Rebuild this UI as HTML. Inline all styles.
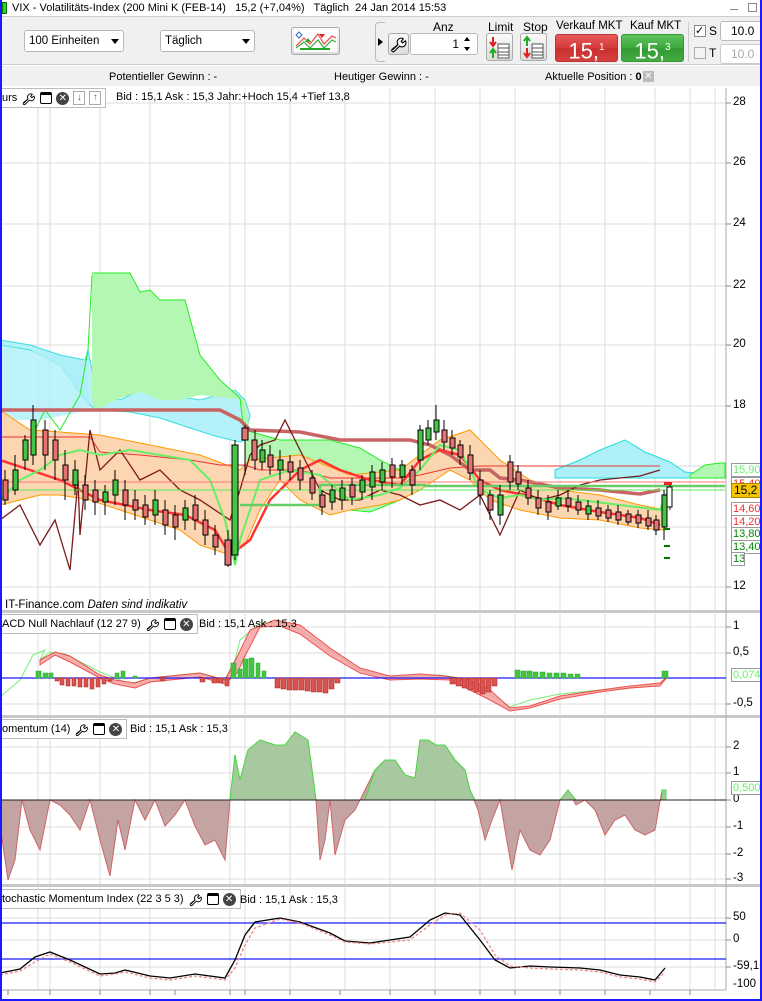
<!DOCTYPE html>
<html><head><meta charset="utf-8"><style>
*{margin:0;padding:0;box-sizing:border-box}
body{width:762px;height:1001px;overflow:hidden;background:#fff;font-family:"Liberation Sans",sans-serif;font-size:11px;color:#000;position:relative}
.abs{position:absolute}
#frame{position:absolute;left:0;top:0;width:762px;height:1001px;border:2px solid #1a1aff;border-top:none;pointer-events:none}
.tb{background:#f0f0f0}
.dd{position:absolute;height:22px;border:1px solid #b8b8b8;border-radius:3px;background:#fff;font-size:11.5px;line-height:20px;padding-left:4px}
.dd i{position:absolute;right:4px;top:8px;border-left:4px solid transparent;border-right:4px solid transparent;border-top:5px solid #000}
.btn{position:absolute;border:1px solid #aaa;border-radius:3px;background:linear-gradient(#fafafa,#ddd)}
.lbl{position:absolute;font-size:11px;white-space:nowrap}
.ax{position:absolute;font-size:11.5px;left:733px}
.tag{position:absolute;left:731px;width:31px;height:14px;border:1px solid #999;background:#fff;font-size:11px;line-height:12px;padding-left:1px;overflow:hidden;white-space:nowrap}
.ptitle{position:absolute;background:#fff;border:1px solid #bbb;border-left:none;height:20px;font-size:11px;line-height:18px;padding-left:2px;white-space:nowrap;display:flex;align-items:center;gap:4px;padding-right:4px}
.win{display:inline-block;width:12px;height:12px;border:1.5px solid #000;border-top-width:3px;border-radius:2px}
.cx{display:inline-block;width:13px;height:13px;background:#444;border-radius:50%;color:#fff;font-size:10px;line-height:13px;text-align:center}
.ar{display:inline-block;width:12px;height:14px;border:1px solid #aaa;font-size:10px;line-height:12px;text-align:center;font-weight:bold}
</style></head><body>
<svg width="0" height="0" style="position:absolute"><defs><symbol id="wr" viewBox="-2 -2 18 18"><path d="M1.5 12.5 L6.5 7.5 M6.5 7.5 A3.8 3.8 0 0 1 11.5 2 L9.5 4.5 L11 6 L13.5 4 A3.8 3.8 0 0 1 8 9 L3 14 A1 1 0 0 1 1 12 Z" fill="#fff" stroke="#000" stroke-width="1.1" stroke-linejoin="round"/></symbol></defs></svg>
<div class="abs" style="left:0;top:0;width:762px;height:17px;background:#fff;border-bottom:1px solid #ccc"></div>
<div class="abs" style="left:2px;top:2px;width:5px;height:12px;background:#3c3;border:1px solid #070"></div>
<div class="lbl" style="left:12px;top:2px;font-size:11px">VIX - Volatilitäts-Index (200 Mini K (FEB-14)&nbsp;&nbsp; 15,2 (+7,04%)&nbsp;&nbsp; Täglich&nbsp; 24 Jan 2014 15:53</div>
<div class="abs" style="left:730px;top:9px;width:8px;height:1px;background:#888"></div>
<div class="abs" style="left:748px;top:3px;width:9px;height:9px;border:1px solid #888"></div>
<div class="abs tb" style="left:0;top:17px;width:762px;height:48px;border-bottom:1px solid #ccc"></div>
<div class="dd" style="left:24px;top:30px;width:100px">100 Einheiten<i></i></div>
<div class="dd" style="left:160px;top:30px;width:95px">Täglich<i></i></div>
<div class="btn" style="left:291px;top:27px;width:49px;height:28px">
<svg width="47" height="26"><rect x="2" y="2" width="43" height="22" fill="#fff"/><polyline points="4,18 12,10 18,16 26,6 32,16 40,8 44,10" fill="none" stroke="#e44" stroke-width="1.2"/><polyline points="4,20 12,14 18,20 26,12 32,20 40,12 44,14" fill="none" stroke="#3a3" stroke-width="1.2"/><rect x="8" y="20" width="30" height="2" fill="#2a2"/><path d="M7 4 l3 3 -3 3 -3 -3z" fill="none" stroke="#36c"/><path d="M13 14 l3 -4 3 4z" fill="#2a2"/><path d="M27 6 l3 4 3 -4z" fill="#d22"/></svg></div>
<div class="abs" style="left:375px;top:22px;width:10px;height:40px;border:1px solid #bbb;border-right:none;border-radius:4px 0 0 4px"></div>
<div class="abs" style="left:378px;top:38px;border-top:4px solid transparent;border-bottom:4px solid transparent;border-left:5px solid #000"></div>
<div class="btn" style="left:388px;top:33px;width:21px;height:22px"><svg width="19" height="20"><use href="#wr"/></svg></div>
<div class="lbl" style="left:433px;top:20px;font-size:12px">Anz</div>
<div class="abs" style="left:410px;top:33px;width:68px;height:22px;border:1px solid #bbb;border-radius:3px;background:#fff;text-align:right;padding-right:18px;line-height:20px;font-size:12px">1</div>
<div class="abs" style="left:464px;top:37px;border-left:3px solid transparent;border-right:3px solid transparent;border-bottom:4px solid #000"></div>
<div class="abs" style="left:464px;top:47px;border-left:3px solid transparent;border-right:3px solid transparent;border-top:4px solid #000"></div>
<div class="lbl" style="left:488px;top:20px;font-size:12px">Limit</div>
<div class="btn" style="left:486px;top:33px;width:27px;height:28px"><svg width="25" height="26"><path d="M6 3 v8 M3 8 l3 4 3 -4" stroke="#d22" stroke-width="2" fill="none"/><path d="M6 24 v-8 M3 19 l3 -4 3 4" stroke="#2a2" stroke-width="2" fill="none"/><rect x="11" y="10" width="11" height="14" fill="#fff" stroke="#555"/><path d="M11 14h11M11 18h11M11 21h11" stroke="#555"/></svg></div>
<div class="lbl" style="left:523px;top:20px;font-size:12px">Stop</div>
<div class="btn" style="left:520px;top:33px;width:27px;height:28px"><svg width="25" height="26"><path d="M6 12 v-8 M3 7 l3 -4 3 4" stroke="#2a2" stroke-width="2" fill="none"/><path d="M6 14 v8 M3 19 l3 4 3 -4" stroke="#d22" stroke-width="2" fill="none"/><rect x="11" y="10" width="11" height="14" fill="#fff" stroke="#555"/><path d="M11 14h11M11 18h11M11 21h11" stroke="#555"/></svg></div>
<div class="lbl" style="left:556px;top:20px;font-size:11.5px">Verkauf MKT</div>
<div class="abs" style="left:555px;top:34px;width:63px;height:28px;border-radius:3px;background:linear-gradient(#e85a5a,#d43a3a 50%,#c83030 52%,#d84040);border:1px solid #b33;color:#fff;font-size:22px;line-height:26px;text-align:center">15,<sup style="font-size:10px">1</sup></div>
<div class="lbl" style="left:630px;top:20px;font-size:11.5px">Kauf MKT</div>
<div class="abs" style="left:621px;top:34px;width:63px;height:28px;border-radius:3px;background:linear-gradient(#5cc45c,#3da83d 50%,#339a33 52%,#44aa44);border:1px solid #393;color:#fff;font-size:22px;line-height:26px;text-align:center">15,<sup style="font-size:10px">3</sup></div>
<div class="abs" style="left:688px;top:22px;width:1px;height:40px;background:#ccc"></div>
<div class="abs" style="left:694px;top:25px;width:12px;height:12px;border:1px solid #888;background:#fff;font-size:11px;line-height:10px">✓</div>
<div class="lbl" style="left:709px;top:24px;font-size:12px">S</div>
<div class="abs" style="left:720px;top:21px;width:42px;height:20px;border:1px solid #bbb;border-radius:3px;background:#fff;line-height:18px;padding-left:10px;font-size:12px">10.0</div>
<div class="abs" style="left:694px;top:47px;width:12px;height:12px;border:1px solid #aaa;background:#f4f4f4"></div>
<div class="lbl" style="left:709px;top:46px;font-size:12px">T</div>
<div class="abs" style="left:720px;top:44px;width:42px;height:20px;border:1px solid #ccc;border-radius:3px;background:#fff;line-height:18px;padding-left:10px;color:#aaa;font-size:12px">10.0</div>
<div class="abs tb" style="left:0;top:66px;width:762px;height:20px"></div>
<div class="lbl" style="left:109px;top:71px">Potentieller Gewinn : -</div>
<div class="lbl" style="left:334px;top:71px">Heutiger Gewinn : -</div>
<div class="lbl" style="left:545px;top:71px">Aktuelle Position : <b>0</b></div>
<div class="abs" style="left:643px;top:71px;width:11px;height:11px;background:#bbb;color:#fff;font-size:10px;line-height:11px;text-align:center">✕</div>

<svg class="abs" style="left:0;top:86px" width="762" height="915" viewBox="0 86 762 915">
<rect x="0" y="86" width="762" height="915" fill="#fff"/>
<g stroke="#dcdcdc" stroke-width="1">
<path d="M38 88V990M50 88V990M100 88V990M150 88V990M230 88V990M245 88V990M290 88V990M345 88V990M390 88V990M435 88V990M480 88V990M515 88V990M560 88V990M605 88V990M655 88V990M690 88V990M715 88V990"/>
<path d="M0 103H726M0 163H726M0 224H726M0 286H726M0 345H726M0 406H726M0 466H726M0 527H726M0 587H726"/>
<path d="M0 627H726M0 653H726M0 704H726"/>
<path d="M0 747H726M0 773H726M0 827H726M0 854H726M0 879H726"/>
<path d="M0 918H726M0 940H726M0 967H726"/>
</g>
<g fill="#c8c8c8"><rect x="0" y="610" width="762" height="3"/><rect x="0" y="715" width="762" height="3"/><rect x="0" y="884" width="762" height="3"/></g>
<path d="M726 88V990" stroke="#aaa"/>
<path d="M0 990H726" stroke="#aaa"/>
<g stroke="#888"><path d="M726 103h5M726 163h5M726 224h5M726 286h5M726 345h5M726 406h5M726 587h5M726 627h5M726 653h5M726 704h5M726 747h5M726 773h5M726 800h5M726 827h5M726 854h5M726 879h5M726 918h5M726 940h5M726 967h5"/></g>
<g stroke="#888"><path d="M8 990v5M50 990v5M100 990v5M150 990v5M175 990v5M230 990v5M245 990v5M290 990v5M340 990v5M390 990v5M435 990v5M480 990v5M515 990v5M560 990v5M605 990v5M650 990v5M690 990v5"/></g>

<path d="M0 345 L30 350 60 365 85 400 95 410 130 412 160 418 190 428 215 436 240 442 245 440 250 415 245 400 235 390 200 400 170 395 140 390 120 400 95 385 88 350 L85 360 60 355 30 345 0 340Z" fill="#aef0f8" stroke="#2dd" stroke-width="1" opacity="0.9"/>
<path d="M80 360 L85 365 L90 410 L40 420 L0 420 L0 345Z" fill="#aef0f8" opacity="0.8"/>
<path d="M555 470 L580 460 600 450 625 440 645 452 670 462 685 472 705 474 725 472 725 478 L555 478Z" fill="#aef0f8" stroke="#2dd"/>
<path d="M92 273 L130 273 140 292 150 290 160 300 185 300 200 355 220 380 240 398 245 440 250 430 245 400 200 395 180 400 160 400 140 392 120 398 105 405 95 412 92 400Z" fill="#b3f7b3"/>
<path d="M92 273 L130 273 140 292 150 290 160 300 185 300 200 355 220 380 240 398 245 440" fill="none" stroke="#2e2" stroke-width="1"/>
<path d="M92 275 L88 350 80 395 60 430 45 410 30 440 10 450" fill="none" stroke="#2e2"/>
<path d="M245 430 L280 440 330 440 360 448 380 460 400 470 420 472 400 500 370 512 350 510 330 495 300 475 260 470 245 470Z" fill="#b3f7b3" stroke="#2e2"/>
<path d="M690 475 L705 465 720 463 725 463 725 478 690 478Z" fill="#b3f7b3" stroke="#2e2"/>
<path d="M0 410 L30 430 60 432 100 435 150 445 200 455 240 470 250 460 300 455 350 475 400 470 440 440 470 430 500 460 530 480 560 490 600 495 640 505 665 510 665 530 640 528 600 520 560 518 520 510 490 500 470 480 450 470 420 490 400 500 380 505 350 510 330 515 300 500 280 480 260 510 245 545 230 555 200 545 180 530 150 520 120 510 90 500 60 495 40 495 20 500 0 505Z" fill="#fcd6b0" stroke="#f90" stroke-width="1"/>
<path d="M0 410 L75 410 220 410 240 420 250 430 300 432 340 440 410 440 430 445 450 455 470 470 490 470 500 478 520 480 560 488 600 490 640 494 660 490" fill="none" stroke="#c86464" stroke-width="3.5"/>
<path d="M0 437 L90 437 L100 452 140 455 190 460 220 465 245 465 260 470 300 470 330 478 400 478 420 475 450 468 480 466 520 466 560 466 660 466" fill="none" stroke="#e33" stroke-width="1"/>
<path d="M0 460 L30 470 60 480 100 500 150 510 185 515 215 530 230 555 250 540 270 500 300 470 320 460 340 470 370 480 400 485 420 460 440 450 460 455 480 480 500 490 530 496 560 505 600 512 640 518 660 525" fill="none" stroke="#f33" stroke-width="2.5"/>
<path d="M0 520 L20 505 40 545 55 520 70 570 78 480 80 535 90 430 100 470 120 450 140 480 160 470 180 490 200 500 215 510 230 520 240 490 250 455 260 445 275 440 285 420 300 450 320 490 340 500 360 500 380 490 400 495 420 505 440 500 460 510 480 495 500 535 520 490 540 500 560 495 580 485 600 480 620 478 640 476 660 470" fill="none" stroke="#7a1a1a" stroke-width="1.3"/>
<path d="M0 500 L20 480 40 470 60 455 80 450 100 455 130 450 160 455 190 460 210 480 225 520 235 565 240 540 260 480 290 470 320 475 350 500 380 495 400 488 420 470 440 445 460 450 480 490 500 498 520 495 540 500 560 498 580 500 620 505 660 510 668 490" fill="none" stroke="#6e6" stroke-width="2"/>
<path d="M240 505 L320 505 L320 485 L425 485 L425 486 L725 486" fill="none" stroke="#6c6" stroke-width="2.5"/>
<path d="M0 490 L725 490" stroke="#5e5" stroke-width="1"/>
<path d="M0 482 L725 482" stroke="#f77" stroke-width="1"/>
<g stroke="#000" stroke-width="1">
<path d="M5 470V505M15 455V495M25 435V470M33 405V465M45 420V470M55 430V480M65 450V500M75 460V495M85 475V510M95 480V515M105 485V515M115 470V505M125 480V520M135 490V520M145 495V525M155 490V525M165 500V535M175 505V540M185 500V530M195 495V530M205 510V545M215 525V555M228 530V567M235 440V560M245 425V475M255 430V470M262 440V470M270 445V475M280 450V480M290 455V480M300 460V490M312 470V500M322 490V515M332 485V510M342 480V510M352 478V505M362 475V500M372 465V500M382 462V490M392 458V488M402 460V485M412 465V495M420 425V470M428 420V445M436 405V440M444 420V450M452 430V455M460 440V465M470 445V480M480 470V505M490 490V520M500 485V525M510 455V490M518 465V490M528 480V505M538 490V515M548 495V520M558 490V510M568 490V512M578 495V515M588 500V520M598 500V520M608 505V522M618 505V525M628 510V525M638 510V528M648 510V530M656 515V535M664 490V540M670 482V510"/>
</g>
<g stroke="#000" stroke-width="1">
<rect x="3" y="480" width="5" height="20" fill="#e57373"/><rect x="13" y="470" width="5" height="20" fill="#44c444"/><rect x="23" y="440" width="5" height="20" fill="#44c444"/><rect x="31" y="420" width="5" height="35" fill="#44c444"/><rect x="43" y="430" width="5" height="25" fill="#e57373"/><rect x="53" y="440" width="5" height="20" fill="#e57373"/><rect x="63" y="465" width="5" height="15" fill="#e57373"/><rect x="73" y="470" width="5" height="15" fill="#44c444"/><rect x="83" y="485" width="5" height="15" fill="#e57373"/><rect x="93" y="490" width="5" height="12" fill="#e57373"/><rect x="103" y="492" width="5" height="10" fill="#44c444"/><rect x="113" y="480" width="5" height="15" fill="#44c444"/><rect x="123" y="490" width="5" height="15" fill="#e57373"/><rect x="133" y="500" width="5" height="10" fill="#e57373"/><rect x="143" y="505" width="5" height="12" fill="#e57373"/><rect x="153" y="500" width="5" height="15" fill="#44c444"/><rect x="163" y="510" width="5" height="15" fill="#e57373"/><rect x="173" y="515" width="5" height="12" fill="#e57373"/><rect x="183" y="508" width="5" height="12" fill="#44c444"/><rect x="193" y="505" width="5" height="15" fill="#e57373"/><rect x="203" y="520" width="5" height="15" fill="#e57373"/><rect x="213" y="535" width="5" height="12" fill="#e57373"/><rect x="225" y="540" width="6" height="25" fill="#e57373"/><rect x="232" y="445" width="6" height="110" fill="#44c444"/><rect x="242" y="428" width="6" height="12" fill="#e57373"/><rect x="252" y="440" width="5" height="20" fill="#e57373"/><rect x="260" y="450" width="5" height="12" fill="#44c444"/><rect x="268" y="455" width="5" height="12" fill="#e57373"/><rect x="278" y="460" width="5" height="10" fill="#44c444"/><rect x="288" y="462" width="5" height="10" fill="#e57373"/><rect x="298" y="468" width="5" height="12" fill="#e57373"/><rect x="310" y="478" width="5" height="15" fill="#e57373"/><rect x="320" y="495" width="5" height="12" fill="#e57373"/><rect x="330" y="490" width="5" height="12" fill="#44c444"/><rect x="340" y="488" width="5" height="12" fill="#44c444"/><rect x="350" y="485" width="5" height="12" fill="#e57373"/><rect x="360" y="480" width="5" height="12" fill="#44c444"/><rect x="370" y="472" width="5" height="15" fill="#44c444"/><rect x="380" y="470" width="5" height="12" fill="#44c444"/><rect x="390" y="465" width="5" height="12" fill="#e57373"/><rect x="400" y="465" width="5" height="12" fill="#44c444"/><rect x="410" y="470" width="5" height="15" fill="#e57373"/><rect x="418" y="430" width="5" height="30" fill="#44c444"/><rect x="426" y="428" width="5" height="12" fill="#44c444"/><rect x="434" y="420" width="5" height="12" fill="#44c444"/><rect x="442" y="430" width="5" height="12" fill="#e57373"/><rect x="450" y="438" width="5" height="10" fill="#e57373"/><rect x="458" y="445" width="5" height="12" fill="#e57373"/><rect x="468" y="455" width="5" height="18" fill="#e57373"/><rect x="478" y="480" width="5" height="15" fill="#e57373"/><rect x="488" y="495" width="5" height="15" fill="#e57373"/><rect x="498" y="495" width="5" height="20" fill="#44c444"/><rect x="508" y="462" width="5" height="20" fill="#e57373"/><rect x="516" y="472" width="5" height="12" fill="#e57373"/><rect x="526" y="488" width="5" height="10" fill="#e57373"/><rect x="536" y="498" width="5" height="10" fill="#e57373"/><rect x="546" y="502" width="5" height="10" fill="#e57373"/><rect x="556" y="498" width="5" height="8" fill="#44c444"/><rect x="566" y="498" width="5" height="8" fill="#e57373"/><rect x="576" y="502" width="5" height="8" fill="#e57373"/><rect x="586" y="506" width="5" height="8" fill="#44c444"/><rect x="596" y="508" width="5" height="8" fill="#e57373"/><rect x="606" y="510" width="5" height="8" fill="#e57373"/><rect x="616" y="512" width="5" height="8" fill="#e57373"/><rect x="626" y="514" width="5" height="8" fill="#e57373"/><rect x="636" y="515" width="5" height="8" fill="#e57373"/><rect x="646" y="518" width="5" height="8" fill="#e57373"/><rect x="654" y="520" width="5" height="10" fill="#e57373"/><rect x="662" y="495" width="5" height="32" fill="#44c444"/><rect x="667" y="487" width="5" height="20" fill="#fff"/>
</g>
<rect x="664" y="482" width="8" height="3" fill="#e22"/>
<rect x="664" y="528" width="6" height="2" fill="#070"/><rect x="664" y="545" width="6" height="2" fill="#070"/><rect x="664" y="557" width="6" height="2" fill="#070"/>
<text x="5" y="608" font-size="11.5" font-family="Liberation Sans">IT-Finance.com <tspan font-style="italic">Daten sind indikativ</tspan></text>

<path d="M0 697 L20 680 33 655 45 650 40 660 50 652 65 654 100 672 120 680 130 684 150 678 200 673 225 680 235 660 240 640 260 623 280 622 300 630 330 650 360 670 390 677 420 676 440 675 460 678 480 690 500 700 510 707 530 700 560 694 600 690 630 688 660 684 668 676" fill="none" stroke="#7e7" stroke-width="1"/>
<path d="M40 660 L55 652 70 656 100 675 115 680 135 683 150 678 200 673 225 680 238 655 250 630 275 620 300 625 330 648 360 668 390 676 420 674 445 676 470 680 490 690 510 708 530 706 560 696 600 690 630 686 660 683 668 676 L660 686 630 688 600 692 560 699 530 708 510 711 490 700 470 690 450 680 420 679 390 680 360 673 330 656 300 634 280 626 260 627 243 660 238 672 225 684 200 677 150 682 135 688 115 684 100 678 70 662 55 655 40 665Z" fill="#f5a0a0" stroke="#e33" stroke-width="1" opacity="0.85"/>
<path d="M0 678H726" stroke="#1a1aff" stroke-width="1.2"/>
<g fill="#44c444" stroke="#2a2" stroke-width="0.5">
<rect x="36" y="671" width="5" height="7"/><rect x="43" y="673" width="5" height="5"/><rect x="49" y="673" width="4" height="5"/>
<rect x="115" y="673" width="4" height="5"/><rect x="121" y="671" width="4" height="7"/><rect x="133" y="676" width="4" height="2"/>
<rect x="231" y="663" width="5" height="15"/><rect x="238" y="669" width="4" height="9"/><rect x="243" y="659" width="5" height="19"/><rect x="249" y="658" width="5" height="20"/><rect x="256" y="663" width="4" height="15"/><rect x="262" y="671" width="4" height="7"/>
<rect x="515" y="670" width="5" height="8"/><rect x="521" y="671" width="5" height="7"/><rect x="527" y="671" width="5" height="7"/><rect x="533" y="672" width="5" height="6"/><rect x="540" y="672" width="5" height="6"/><rect x="547" y="673" width="5" height="5"/><rect x="554" y="673" width="5" height="5"/><rect x="561" y="673" width="5" height="5"/><rect x="568" y="674" width="5" height="4"/><rect x="575" y="674" width="5" height="4"/><rect x="662" y="671" width="6" height="7"/>
</g>
<g fill="#d9534f" stroke="#a22" stroke-width="0.5">
<rect x="55" y="678" width="4" height="3"/><rect x="60" y="678" width="4" height="7"/><rect x="66" y="678" width="4" height="8"/><rect x="72" y="678" width="4" height="8"/><rect x="78" y="678" width="4" height="9"/><rect x="84" y="678" width="4" height="9"/><rect x="90" y="678" width="4" height="11"/><rect x="96" y="678" width="4" height="9"/><rect x="102" y="678" width="4" height="6"/><rect x="108" y="678" width="4" height="3"/>
<rect x="160" y="678" width="5" height="3"/><rect x="200" y="678" width="5" height="4"/><rect x="212" y="678" width="5" height="5"/><rect x="218" y="678" width="5" height="5"/><rect x="225" y="678" width="4" height="8"/>
<rect x="275" y="678" width="5" height="10"/><rect x="281" y="678" width="5" height="11"/><rect x="287" y="678" width="5" height="12"/><rect x="293" y="678" width="5" height="12"/><rect x="299" y="678" width="5" height="12"/><rect x="305" y="678" width="5" height="13"/><rect x="311" y="678" width="5" height="14"/><rect x="317" y="678" width="5" height="14"/><rect x="323" y="678" width="5" height="15"/><rect x="329" y="678" width="5" height="11"/><rect x="335" y="678" width="5" height="5"/>
<rect x="450" y="678" width="5" height="6"/><rect x="456" y="678" width="5" height="8"/><rect x="462" y="678" width="5" height="10"/><rect x="468" y="678" width="5" height="12"/><rect x="474" y="678" width="5" height="14"/><rect x="480" y="678" width="5" height="16"/><rect x="486" y="678" width="5" height="14"/><rect x="492" y="678" width="5" height="8"/>
</g>

<path d="M0 800 L0 825 8 880 15 860 22 800 30 830 40 850 50 800 60 805 70 815 80 830 90 800 100 840 110 876 118 820 125 850 135 800 145 820 155 800 165 826 175 815 185 800 195 826 205 845 215 840 225 860 230 800 235 755 240 780 248 750 260 740 275 745 285 745 295 732 308 740 316 800 320 860 325 840 330 800 335 855 345 820 355 810 365 790 375 770 385 760 395 760 405 775 415 778 420 740 428 740 436 745 445 745 455 760 465 770 470 790 478 810 485 840 492 820 500 800 505 830 512 870 520 830 530 850 540 855 550 840 560 800 568 790 576 805 585 800 595 810 605 835 615 820 625 815 635 830 645 835 655 830 662 790 666 790 L666 800Z" fill="#c4a3a3" stroke="#c66" stroke-width="1"/>
<path d="M230 800 L235 755 240 780 248 750 260 740 275 745 285 745 295 732 308 740 316 800Z M365 800 L375 770 385 760 395 760 405 775 415 778 420 740 428 740 436 745 445 745 455 760 465 770 470 790 475 800Z M560 800 L568 790 576 800Z M662 800 L662 790 666 790 666 800Z" fill="#a8c8a0" stroke="#4d4" stroke-width="1"/>
<path d="M0 800H726" stroke="#222" stroke-width="1"/>

<path d="M0 923H726M0 959H726" stroke="#1a1aff" stroke-width="1.2"/>
<path d="M0 973 L20 969 35 957 50 952 70 960 100 974 115 973 125 970 150 976 170 978 195 974 225 978 235 960 245 935 255 922 280 918 300 922 330 933 345 941 370 943 390 940 410 937 430 920 445 913 460 915 480 940 495 960 510 968 530 966 550 967 580 968 600 970 620 975 640 977 655 980 665 968" fill="none" stroke="#000" stroke-width="1.3"/>
<path d="M0 975 L20 971 35 962 50 954 70 962 100 976 115 974 125 972 150 978 170 980 195 976 225 980 235 968 245 945 255 928 280 919 300 923 330 935 345 942 370 944 390 942 410 940 430 925 445 915 460 913 480 930 495 955 510 966 530 968 550 969 580 970 600 972 620 977 640 979 655 982 665 972" fill="none" stroke="#e88" stroke-width="1.3" stroke-dasharray="3,2"/>
</svg>

<div class="ptitle" style="left:0;top:88px">urs
<svg width="15" height="15"><use href="#wr"/></svg>
<span class="win"></span>
<span class="cx">✕</span>
<span class="ar" style="color:#d22">↓</span>
<span class="ar" style="color:#2a2">↑</span></div>
<div class="lbl" style="left:116px;top:91px">Bid : 15,1 Ask : 15,3 Jahr:+Hoch 15,4 +Tief 13,8</div>
<div class="ptitle" style="left:0;top:614px">ACD Null Nachlauf (12 27 9)
<svg width="15" height="15"><use href="#wr"/></svg>
<span class="win"></span>
<span class="cx">✕</span></div>
<div class="lbl" style="left:199px;top:618px">Bid : 15,1 Ask : 15,3</div>
<div class="ptitle" style="left:0;top:719px">omentum (14)
<svg width="15" height="15"><use href="#wr"/></svg>
<span class="win"></span>
<span class="cx">✕</span></div>
<div class="lbl" style="left:130px;top:723px">Bid : 15,1 Ask : 15,3</div>
<div class="ptitle" style="left:0;top:889px">tochastic Momentum Index (22 3 5 3)
<svg width="15" height="15"><use href="#wr"/></svg>
<span class="win"></span>
<span class="cx">✕</span></div>
<div class="lbl" style="left:240px;top:894px">Bid : 15,1 Ask : 15,3</div>

<div class="ax" style="top:96px">28</div><div class="ax" style="top:156px">26</div><div class="ax" style="top:217px">24</div><div class="ax" style="top:279px">22</div><div class="ax" style="top:338px">20</div><div class="ax" style="top:399px">18</div><div class="ax" style="top:580px">12</div>
<div class="tag" style="top:463px;color:#6e6">15,900</div>
<div class="tag" style="top:477px;color:#e33">15,400</div>
<div class="abs" style="left:731px;top:483px;width:31px;height:15px;background:#f5c400;border:1px solid #a80;font-size:12px;line-height:13px;padding-left:2px">15,2</div>
<div class="tag" style="top:502px;color:#e33">14,600</div>
<div class="tag" style="top:515px;color:#e33">14,200</div>
<div class="tag" style="top:527px;color:#080">13,800</div>
<div class="tag" style="top:540px;color:#080">13,400</div>
<div class="tag" style="top:552px;color:#080;width:14px">13</div>
<div class="ax" style="top:620px">1</div><div class="ax" style="top:646px">0,5</div><div class="ax" style="top:697px">-0,5</div>
<div class="tag" style="top:668px;color:#6e6">0,074</div>
<div class="ax" style="top:740px">2</div><div class="ax" style="top:766px">1</div><div class="ax" style="top:793px">0</div><div class="ax" style="top:820px">-1</div><div class="ax" style="top:847px">-2</div><div class="ax" style="top:872px">-3</div>
<div class="tag" style="top:781px;color:#6e6">0,5000</div>
<div class="ax" style="top:911px">50</div><div class="ax" style="top:933px">0</div><div class="ax" style="top:960px">-59,16</div><div class="ax" style="top:978px">-100</div>
<div id="frame"></div>
</body></html>
